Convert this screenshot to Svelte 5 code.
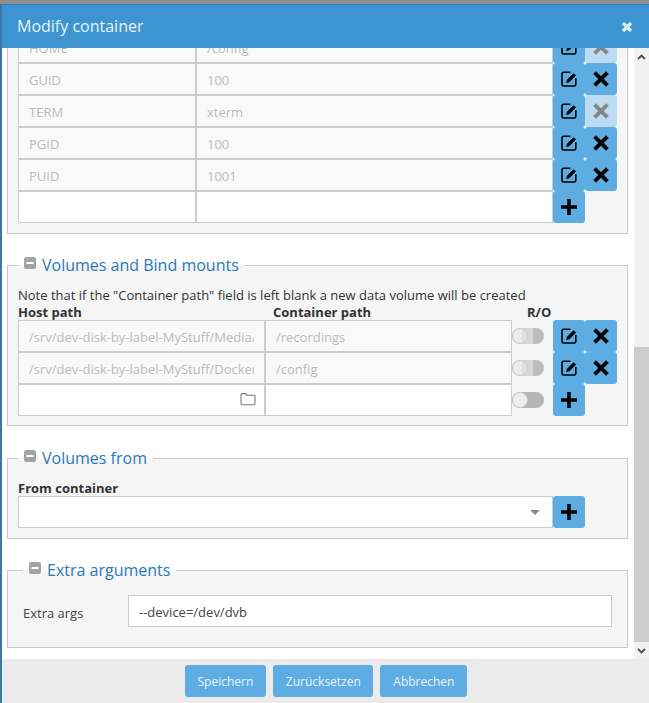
<script>
  const envRows = [
    { k: 'HOME', v: '/config', off: true },
    { k: 'GUID', v: '100' },
    { k: 'TERM', v: 'xterm', off: true },
    { k: 'PGID', v: '100' },
    { k: 'PUID', v: '1001' }
  ];
  const mounts = [
    { h: '/srv/dev-disk-by-label-MyStuff/Media/recordings', c: '/recordings' },
    { h: '/srv/dev-disk-by-label-MyStuff/Docker/tvheadend', c: '/config' }
  ];
</script>

{#snippet editIcon()}
  <svg class="ico" viewBox="0 0 16 16" width="16" height="16" aria-hidden="true">
    <path d="M9.4 1.2H2.6A1.6 1.6 0 0 0 1 2.8v10.6A1.6 1.6 0 0 0 2.6 15h10.6a1.6 1.6 0 0 0 1.6-1.6V7" fill="none" stroke="currentColor" stroke-width="1.6" />
    <path d="M12.6 2.2l2.4 2.4-6.6 6.6-3.3.9.9-3.3z" fill="currentColor" />
  </svg>
{/snippet}
{#snippet xIcon()}
  <svg class="ico" viewBox="0 0 16 16" width="16" height="16" aria-hidden="true">
    <path d="M1.6 1.6l12.8 12.8M14.4 1.6L1.6 14.4" fill="none" stroke="currentColor" stroke-width="3.8" />
  </svg>
{/snippet}
{#snippet plusIcon()}
  <svg class="ico" viewBox="0 0 16 16" width="16" height="16" aria-hidden="true">
    <path d="M8 0v16M0 8h16" fill="none" stroke="currentColor" stroke-width="3.6" />
  </svg>
{/snippet}
{#snippet collapse()}
  <svg class="collapse" viewBox="0 0 12 12" width="12" height="12" aria-hidden="true">
    <rect width="12" height="12" rx="2.2" fill="#a3a3a3" />
    <rect x="2.5" y="5" width="7" height="2" fill="#fff" />
  </svg>
{/snippet}

<div class="page">
  <div class="topbar"></div>
  <div class="main">
    <div class="strip"></div>
    <div class="dialog">
      <header class="head">
        <span class="title">Modify container</span>
        <svg class="close" viewBox="0 0 12 12" width="12" height="12" aria-hidden="true">
          <path d="M2 2l8 8M10 2l-8 8" fill="none" stroke="#d9edf9" stroke-width="3.2" />
        </svg>
      </header>
      <div class="body">
        <div class="content">
          <fieldset class="fs first">
            {#each envRows as r}
              <div class="row env">
                <input class="field" readonly disabled value={r.k} />
                <input class="field" readonly disabled value={r.v} />
                <button class="btn">{@render editIcon()}</button>
                <button class="btn" class:off={r.off}>{@render xIcon()}</button>
              </div>
            {/each}
            <div class="row env">
              <input class="field" />
              <input class="field" />
              <button class="btn">{@render plusIcon()}</button>
            </div>
          </fieldset>

          <fieldset class="fs vols">
            <legend>{@render collapse()}Volumes and Bind mounts</legend>
            <p class="note">Note that if the "Container path" field is left blank a new data volume will be created</p>
            <div class="row mount labels">
              <b>Host path</b><b class="cp">Container path</b><b class="ro">R/O</b>
            </div>
            {#each mounts as m}
              <div class="row mount">
                <input class="field" readonly disabled value={m.h} />
                <input class="field" readonly disabled value={m.c} />
                <span class="tcell"><span class="toggle dis"><span class="knob"></span></span></span>
                <button class="btn">{@render editIcon()}</button>
                <button class="btn">{@render xIcon()}</button>
              </div>
            {/each}
            <div class="row mount">
              <span class="pick">
                <input class="field" />
                <svg class="folder" viewBox="0 0 16 14" width="16" height="14" aria-hidden="true">
                  <path d="M1 3a1.4 1.4 0 0 1 1.4-1.4h3.2L7 3.2h6.6A1.4 1.4 0 0 1 15 4.6v6.8a1.4 1.4 0 0 1-1.4 1.4H2.4A1.4 1.4 0 0 1 1 11.4z" fill="none" stroke="#777" stroke-width="1.1" />
                </svg>
              </span>
              <input class="field" />
              <span class="tcell"><span class="toggle"><span class="knob"></span></span></span>
              <button class="btn">{@render plusIcon()}</button>
            </div>
          </fieldset>

          <fieldset class="fs from">
            <legend>{@render collapse()}Volumes from</legend>
            <b class="flabel">From container</b>
            <div class="row sel">
              <span class="select"><i class="caret"></i></span>
              <button class="btn">{@render plusIcon()}</button>
            </div>
          </fieldset>

          <fieldset class="fs extra">
            <legend>{@render collapse()}Extra arguments</legend>
            <div class="argrow">
              <label for="args">Extra args</label>
              <input id="args" class="field" value="--device=/dev/dvb" />
            </div>
          </fieldset>
        </div>
        <div class="sb">
          <span class="arrow"><svg viewBox="0 0 9 6" width="9" height="6" aria-hidden="true"><path d="M1 5l3.5-3.5L8 5" fill="none" stroke="#505050" stroke-width="1.8" /></svg></span>
          <span class="rail"></span>
          <span class="thumb"></span>
          <span class="arrow"><svg viewBox="0 0 9 6" width="9" height="6" aria-hidden="true"><path d="M1 1l3.5 3.5L8 1" fill="none" stroke="#505050" stroke-width="1.8" /></svg></span>
        </div>
      </div>
      <footer class="foot">
        <button class="act">Speichern</button>
        <button class="act mid">Zurücksetzen</button>
        <button class="act">Abbrechen</button>
      </footer>
    </div>
  </div>
</div>

<style>
  :global(body) { margin: 0; background: #8f8f8f; }
  * { box-sizing: border-box; }
  .page {
    width: 649px; height: 703px; overflow: hidden;
    display: flex; flex-direction: column;
    font-family: "Open Sans", sans-serif; font-size: 13px; color: #333;
  }
  .topbar { height: 4px; background: #8f8f8f; flex: none; }
  .main { flex: 1; display: flex; min-height: 0; }
  .strip { width: 2px; flex: none; background: #3a78a8; }
  .dialog { flex: 1; min-width: 0; display: flex; flex-direction: column; background: #fff; }
  .head {
    height: 44px; flex: none; background: #3d94d0; border-top: 1px solid #2b80bf;
    display: flex; align-items: center; justify-content: space-between;
    padding: 0 16px 0 15px;
  }
  .title { color: #e6f3fb; font-size: 16px; margin-top: -2px; }
  .body { flex: 1; min-height: 0; display: flex; overflow: hidden; }
  .content { flex: 1; min-width: 0; overflow: hidden; }
  .sb { width: 15px; flex: none; display: flex; flex-direction: column; background: #f1f1f1; }
  .arrow { height: 17px; flex: none; display: flex; align-items: center; justify-content: center; }
  .rail { flex: 1; }
  .thumb { height: 295px; flex: none; background: #cdcdcd; }

  .fs {
    margin: 0 6px 0 5px; min-width: 0; border: 1px solid #c8c8c8;
    background: #f5f5f5; padding: 0 10px;
  }
  .first { margin-top: -17px; height: 203px; padding-top: 0; border-top: 0; }
  .vols { margin-top: 21px; height: 171px; padding-top: 11px; }
  .from { margin-top: 22px; height: 91px; padding-top: 12px; }
  .extra { margin-top: 21px; height: 88px; padding: 15px 15px 0; }
  legend {
    padding: 0 6px; color: #2a7ab8; font-size: 16px; line-height: 20px;
    display: flex; align-items: center; gap: 6px;
  }
  .collapse { flex: none; position: relative; top: -2px; }

  .row { display: flex; height: 32px; }
  .env .field:nth-child(1) { width: 178px; }
  .env .field:nth-child(2) { width: 357px; }
  .mount > .field, .pick { width: 247px; }
  .field {
    display: block; height: 32px; margin: 0; padding: 2px 10px 0; border: 1px solid #ccc; border-radius: 0;
    background: #fff; font: 13px "Open Sans", sans-serif; color: #444; outline: 0; min-width: 0;
  }
  .field:disabled { background: #f9f9f9; color: #bbb; -webkit-text-fill-color: #bbb; opacity: 1; }
  .pick { position: relative; display: block; height: 32px; }
  .pick .field { width: 100%; }
  .folder { position: absolute; right: 9px; top: 8px; }
  .btn {
    width: 32px; height: 32px; flex: none; border: 0; padding: 0; margin: 0;
    background: #5dade2; color: #000; border-radius: 3px;
    display: flex; align-items: center; justify-content: center;
  }
  .btn.off { background: #bedcf1; color: #858585; }
  .ico { display: block; }

  .note { margin: 0; line-height: 18px; height: 18px; }
  .labels { height: 16px; line-height: 16px; }
  .labels b { width: 247px; font-weight: 700; color: #333; }
  .labels .cp { padding-left: 8px; }
  .labels .ro { width: auto; margin-left: 15px; }
  .tcell { width: 41px; flex: none; display: flex; align-items: center; }
  .toggle { position: relative; display: block; width: 32px; height: 16px; border-radius: 8px; background: #b5b5b5; }
  .knob {
    position: absolute; left: 0; top: 0; width: 16px; height: 16px; border-radius: 50%;
    background: #eee; border: 1px solid #ccc;
  }
  .toggle.dis { background: linear-gradient(90deg, #d6d6d6 0 21px, #bcbcbc 21px); }
  .toggle.dis .knob { background: linear-gradient(90deg, #ececec 0 9px, #dedede 9px); }

  .flabel { display: block; line-height: 16px; height: 16px; font-weight: 700; color: #333; }
  .sel .select {
    width: 535px; height: 32px; background: #fff; border: 1px solid #ccc;
    display: flex; align-items: center; justify-content: flex-end; padding-right: 12px;
  }
  .caret { width: 0; height: 0; border: 5px solid transparent; border-top: 5px solid #8a8a8a; border-bottom: 0; }

  .argrow { display: flex; align-items: center; }
  .argrow label { width: 105px; flex: none; color: #444; padding-top: 4px; }
  .argrow .field { width: 484px; }

  .foot {
    height: 44px; flex: none; background: #ebebeb;
    display: flex; justify-content: center; gap: 7px; padding: 6px 0 0 1px;
  }
  .act {
    height: 32px; border: 0; border-radius: 3px; background: #5dade2; color: #e8f4fb;
    font: 12px "Open Sans", sans-serif; padding: 0 13px; margin: 0;
  }
  .act.mid { padding: 0 12.5px; }
</style>
